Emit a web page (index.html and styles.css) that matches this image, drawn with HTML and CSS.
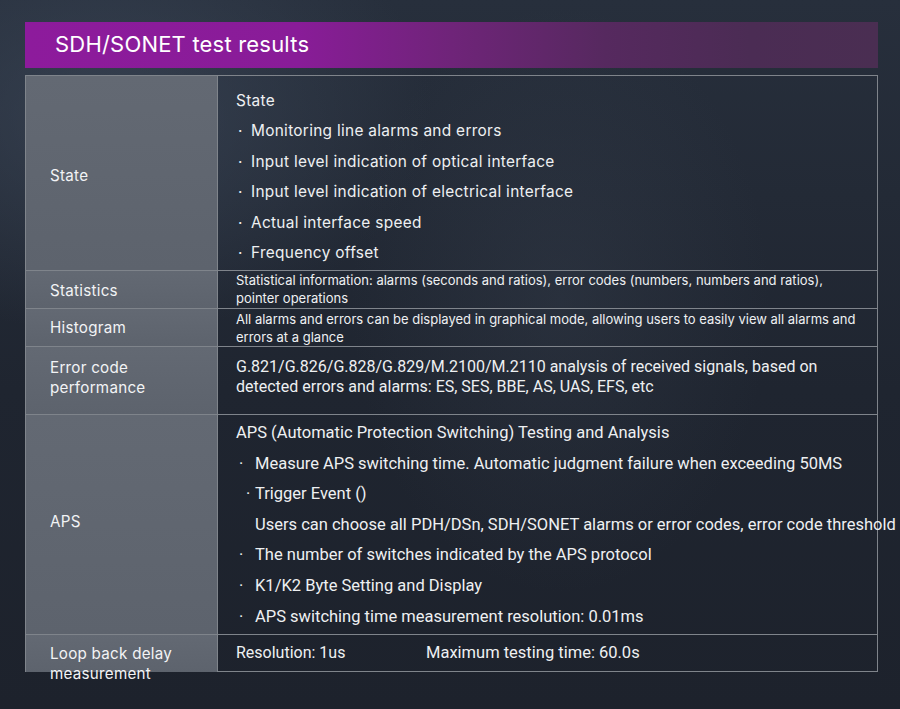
FILE: index.html
```html
<!DOCTYPE html>
<html lang="en">
<head>
<meta charset="utf-8">
<title>SDH/SONET test results</title>
<link rel="stylesheet" href="styles.css">
</head>
<body>
<div class="page">
  <div class="title">SDH/SONET test results</div>
  <div class="table">
    <div class="row r-state">
      <div class="label l-state">State</div>
      <div class="cell c-state">
        <div class="line">State</div>
        <div class="line bul"><span class="dot">·</span>Monitoring line alarms and errors</div>
        <div class="line bul"><span class="dot">·</span>Input level indication of optical interface</div>
        <div class="line bul"><span class="dot">·</span>Input level indication of electrical interface</div>
        <div class="line bul"><span class="dot">·</span>Actual interface speed</div>
        <div class="line bul"><span class="dot">·</span>Frequency offset</div>
      </div>
    </div>
    <div class="row r-stat">
      <div class="label l-stat">Statistics</div>
      <div class="cell c-small c-stat">Statistical information: alarms (seconds and ratios), error codes (numbers, numbers and ratios), pointer operations</div>
    </div>
    <div class="row r-hist">
      <div class="label">Histogram</div>
      <div class="cell c-small c-hist">All alarms and errors can be displayed in graphical mode, allowing users to easily view all alarms and errors at a glance</div>
    </div>
    <div class="row r-err">
      <div class="label l-err">Error code<br>performance</div>
      <div class="cell c-err">G.821/G.826/G.828/G.829/M.2100/M.2110 analysis of received signals, based on detected errors and alarms: ES, SES, BBE, AS, UAS, EFS, etc</div>
    </div>
    <div class="row r-aps">
      <div class="label l-aps">APS</div>
      <div class="cell c-aps">
        <div class="line">APS (Automatic Protection Switching) Testing and Analysis</div>
        <div class="line abul"><span class="adot">·</span>Measure APS switching time. Automatic judgment failure when exceeding 50MS</div>
        <div class="line abul"><span class="adot2">·</span>Trigger Event ()</div>
        <div class="line abul">Users can choose all PDH/DSn, SDH/SONET alarms or error codes, error code threshold</div>
        <div class="line abul"><span class="adot">·</span>The number of switches indicated by the APS protocol</div>
        <div class="line abul"><span class="adot">·</span>K1/K2 Byte Setting and Display</div>
        <div class="line abul"><span class="adot">·</span>APS switching time measurement resolution: 0.01ms</div>
      </div>
    </div>
    <div class="row r-loop">
      <div class="label l-loop">Loop back delay<br>measurement</div>
      <div class="cell c-loop"><span class="res">Resolution: 1us</span><span class="max">Maximum testing time: 60.0s</span></div>
    </div>
  </div>
</div>
</body>
</html>
```
FILE: styles.css
```css
* { box-sizing: border-box; }
html, body { margin: 0; height: 100%; }
body {
  width: 900px;
  height: 709px;
  overflow: hidden;
  font-family: Inter, Roboto, "Noto Sans", sans-serif;
  color: #eef0f2;
  background:
    radial-gradient(ellipse 460px 320px at 110px 110px, rgba(64,76,94,0.6), rgba(64,76,94,0) 70%),
    radial-gradient(ellipse 300px 420px at 560px 300px, rgba(70,80,96,0.22), rgba(70,80,96,0) 70%),
    linear-gradient(180deg, #272f3c 0%, #1f2530 55%, #1d222c 100%);
}
.page {
  padding: 22px 22px 0 25px;
}
.title {
  width: 853px;
  height: 46px;
  line-height: 45px;
  padding-left: 30px;
  font-size: 22px;
  letter-spacing: 0.2px;
  color: #ffffff;
  background: linear-gradient(90deg, #8d1b9c 0%, #891c98 32%, #6f2479 50%, #56295f 68%, #4b2c54 85%, #4a2e52 100%);
  margin-bottom: 7px;
}
.table {
  width: 853px;
  border: 1px solid #7f848b;
  border-bottom: none;
}
.row {
  display: grid;
  grid-template-columns: 192px 1fr;
  border-bottom: 1px solid #7f848b;
}
.label {
  background: linear-gradient(180deg, #636973 0%, #5d636d 100%);
  border-right: 1px solid #7f848b;
  display: flex;
  align-items: center;
  padding-left: 24px;
  font-size: 15.2px;
  letter-spacing: 0.25px;
  line-height: 20px;
  color: #f2f3f5;
}
.l-state { padding-top: 6px; }
.l-stat { padding-top: 3px; }
.l-err { padding-bottom: 6px; }
.l-aps { padding-bottom: 6px; }
.cell {
  padding-left: 18px;
}
.line { white-space: nowrap; }
.r-state { height: 195px; }
.c-state { padding-top: 10px; font-size: 15.4px; letter-spacing: 0.3px; line-height: 30.4px; }
.dot { display: inline-block; width: 15px; padding-left: 2px; letter-spacing: 0; }
.r-stat { height: 38px; }
.r-hist { height: 38px; }
.c-small { font-size: 13px; line-height: 17.5px; padding-right: 20px; }
.c-stat { padding-top: 1px; }
.c-hist { padding-top: 2px; }
.r-err { height: 68px; }
.c-err { font-family: Roboto, "Noto Sans", sans-serif; font-size: 16px; line-height: 20px; padding-top: 10px; padding-right: 40px; }
.r-aps { height: 220px; }
.c-aps { font-family: Roboto, "Noto Sans", sans-serif; font-size: 16.5px; line-height: 30.6px; padding-top: 3px; }
.abul { position: relative; padding-left: 19px; }
.adot { position: absolute; left: 3px; top: 0; }
.adot2 { position: absolute; left: 10px; top: 0; }
.r-loop { height: 37px; }
.l-loop { align-items: flex-start; padding-top: 9px; height: 37px; white-space: nowrap; }
.c-loop { font-family: Roboto, "Noto Sans", sans-serif; font-size: 16px; line-height: 20px; padding-top: 8px; white-space: nowrap; }
.res { display: inline-block; width: 190px; }
.max { font-size: 16.5px; }
```
